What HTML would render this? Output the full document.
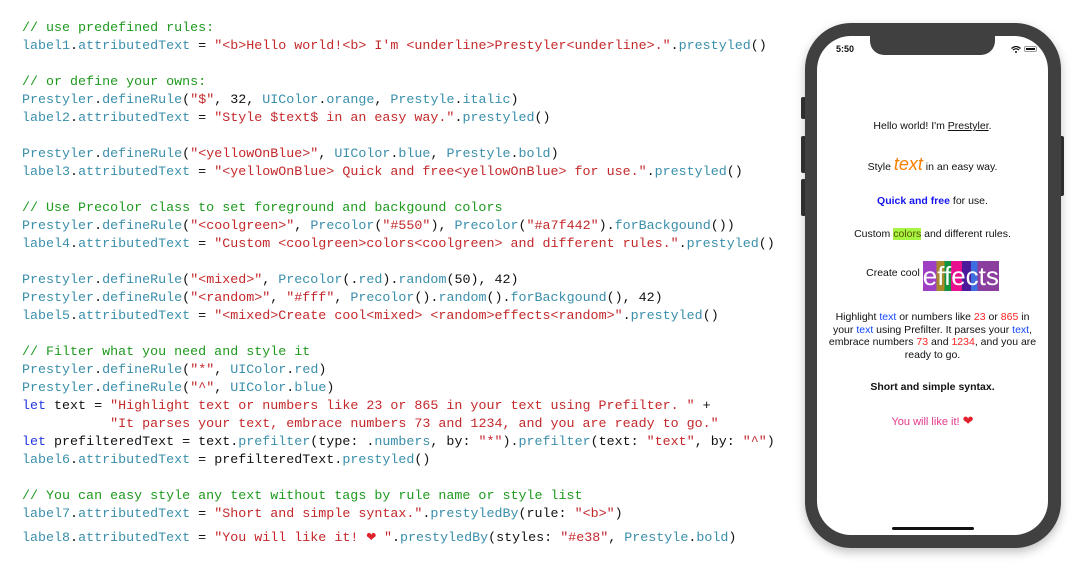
<!DOCTYPE html>
<html><head><meta charset="utf-8"><style>
body{margin:0;width:1085px;height:577px;background:#fff;position:relative;overflow:hidden}
pre{position:absolute;left:22px;top:20px;margin:0;font:13.35px/18px "Liberation Mono",monospace;color:#111}
.c{color:#1f9a1f}.i{color:#3a8fab}.s{color:#c4282b}.k{color:#2236e0}
.ph{position:absolute;left:805px;top:23px;width:256px;height:525px;background:#404040;border-radius:46px;box-shadow:0 4px 10px rgba(0,0,0,.25)}
.scr{position:absolute;left:817px;top:36px;width:231px;height:499px;background:#fff;border-radius:34px;overflow:hidden;font-family:"Liberation Sans",sans-serif;color:#111;text-align:center}
.notch{position:absolute;left:53px;top:0;width:125px;height:19px;background:#404040;border-radius:0 0 14px 14px}
.btn{position:absolute;background:#333;border-radius:2px}
.l{position:absolute;left:0;width:231px;font-size:10.5px}
</style></head><body>
<pre><span class="c">// use predefined rules:</span>
<span class="i">label1</span>.<span class="i">attributedText</span> = <span class="s">"&lt;b&gt;Hello world!&lt;b&gt; I'm &lt;underline&gt;Prestyler&lt;underline&gt;."</span>.<span class="i">prestyled</span>()

<span class="c">// or define your owns:</span>
<span class="i">Prestyler</span>.<span class="i">defineRule</span>(<span class="s">"$"</span>, 32, <span class="i">UIColor</span>.<span class="i">orange</span>, <span class="i">Prestyle</span>.<span class="i">italic</span>)
<span class="i">label2</span>.<span class="i">attributedText</span> = <span class="s">"Style $text$ in an easy way."</span>.<span class="i">prestyled</span>()

<span class="i">Prestyler</span>.<span class="i">defineRule</span>(<span class="s">"&lt;yellowOnBlue&gt;"</span>, <span class="i">UIColor</span>.<span class="i">blue</span>, <span class="i">Prestyle</span>.<span class="i">bold</span>)
<span class="i">label3</span>.<span class="i">attributedText</span> = <span class="s">"&lt;yellowOnBlue&gt; Quick and free&lt;yellowOnBlue&gt; for use."</span>.<span class="i">prestyled</span>()

<span class="c">// Use Precolor class to set foreground and backgound colors</span>
<span class="i">Prestyler</span>.<span class="i">defineRule</span>(<span class="s">"&lt;coolgreen&gt;"</span>, <span class="i">Precolor</span>(<span class="s">"#550"</span>), <span class="i">Precolor</span>(<span class="s">"#a7f442"</span>).<span class="i">forBackgound</span>())
<span class="i">label4</span>.<span class="i">attributedText</span> = <span class="s">"Custom &lt;coolgreen&gt;colors&lt;coolgreen&gt; and different rules."</span>.<span class="i">prestyled</span>()

<span class="i">Prestyler</span>.<span class="i">defineRule</span>(<span class="s">"&lt;mixed&gt;"</span>, <span class="i">Precolor</span>(.<span class="i">red</span>).<span class="i">random</span>(50), 42)
<span class="i">Prestyler</span>.<span class="i">defineRule</span>(<span class="s">"&lt;random&gt;"</span>, <span class="s">"#fff"</span>, <span class="i">Precolor</span>().<span class="i">random</span>().<span class="i">forBackgound</span>(), 42)
<span class="i">label5</span>.<span class="i">attributedText</span> = <span class="s">"&lt;mixed&gt;Create cool&lt;mixed&gt; &lt;random&gt;effects&lt;random&gt;"</span>.<span class="i">prestyled</span>()

<span class="c">// Filter what you need and style it</span>
<span class="i">Prestyler</span>.<span class="i">defineRule</span>(<span class="s">"*"</span>, <span class="i">UIColor</span>.<span class="i">red</span>)
<span class="i">Prestyler</span>.<span class="i">defineRule</span>(<span class="s">"^"</span>, <span class="i">UIColor</span>.<span class="i">blue</span>)
<span class="k">let</span> text = <span class="s">"Highlight text or numbers like 23 or 865 in your text using Prefilter. "</span> +
           <span class="s">"It parses your text, embrace numbers 73 and 1234, and you are ready to go."</span>
<span class="k">let</span> prefilteredText = text.<span class="i">prefilter</span>(type: .<span class="i">numbers</span>, by: <span class="s">"*"</span>).<span class="i">prefilter</span>(text: <span class="s">"text"</span>, by: <span class="s">"^"</span>)
<span class="i">label6</span>.<span class="i">attributedText</span> = prefilteredText.<span class="i">prestyled</span>()

<span class="c">// You can easy style any text without tags by rule name or style list</span>
<span class="i">label7</span>.<span class="i">attributedText</span> = <span class="s">"Short and simple syntax."</span>.<span class="i">prestyledBy</span>(rule: <span class="s">"&lt;b&gt;"</span>)
<span style="line-height:26px"><span class="i">label8</span>.<span class="i">attributedText</span> = <span class="s">"You will like it! <span style="color:#e0202a;font-size:16px">❤</span> "</span>.<span class="i">prestyledBy</span>(styles: <span class="s">"#e38"</span>, <span class="i">Prestyle</span>.<span class="i">bold</span>)</span></pre>

<div class="btn" style="left:801px;top:97px;width:5px;height:22px"></div>
<div class="btn" style="left:801px;top:136px;width:5px;height:37px"></div>
<div class="btn" style="left:801px;top:179px;width:5px;height:37px"></div>
<div class="btn" style="left:1059px;top:136px;width:5px;height:60px"></div>
<div class="ph"></div>
<div class="scr">
 <div class="notch"></div>
 <div style="position:absolute;left:19px;top:8px;font-size:9px;font-weight:bold">5:50</div>
 <svg style="position:absolute;left:194px;top:10px" width="10" height="7" viewBox="0 0 10 7"><path d="M0.5 2.5 Q5 -1.5 9.5 2.5 M2 4 Q5 1.5 8 4" stroke="#111" stroke-width="1.3" fill="none"/><circle cx="5" cy="6" r="1" fill="#111"/></svg>
 <div style="position:absolute;left:207px;top:10px;width:13px;height:6px;border:1px solid #999;border-radius:2px;box-sizing:border-box;padding:1px"><div style="background:#111;width:100%;height:100%"></div></div>
 <div class="l" style="top:84px">Hello world! I'm <u>Prestyler</u>.</div>
 <div class="l" style="top:118px">Style <i style="color:#f57f00;font-size:18px">text</i> in an easy way.</div>
 <div class="l" style="top:159px"><b style="color:#1414f0">Quick and free</b> for use.</div>
 <div class="l" style="top:192px">Custom <span style="background:#a7f442;color:#550">colors</span> and different rules.</div>
 <div class="l" style="top:225px;height:36px">Create cool <span style="display:inline-block;vertical-align:-9px;color:#fff;font-size:26px;line-height:30px;background:linear-gradient(90deg,#9e3fc4 0 18%,#a88a2c 18% 28%,#119440 28% 37%,#e8108f 37% 51%,#4a1a9a 51% 63%,#3e6ee0 63% 72%,#8a3e9e 72%)">effects</span></div>
 <div class="l" style="top:275px;line-height:12.5px;padding:0 10px;box-sizing:border-box">Highlight <span style="color:#14f">text</span> or numbers like <span style="color:#f22">23</span> or <span style="color:#f22">865</span> in your <span style="color:#14f">text</span> using Prefilter. It parses your <span style="color:#14f">text</span>, embrace numbers <span style="color:#f22">73</span> and <span style="color:#f22">1234</span>, and you are ready to go.</div>
 <div class="l" style="top:345px;font-weight:bold">Short and simple syntax.</div>
 <div class="l" style="top:377px;color:#e3388a;font-size:11px">You will like it! <span style="color:#e0202a;font-size:13px">❤</span></div>
 <div style="position:absolute;left:75px;top:491px;width:82px;height:3px;background:#111;border-radius:2px"></div>
</div>
</body></html>
